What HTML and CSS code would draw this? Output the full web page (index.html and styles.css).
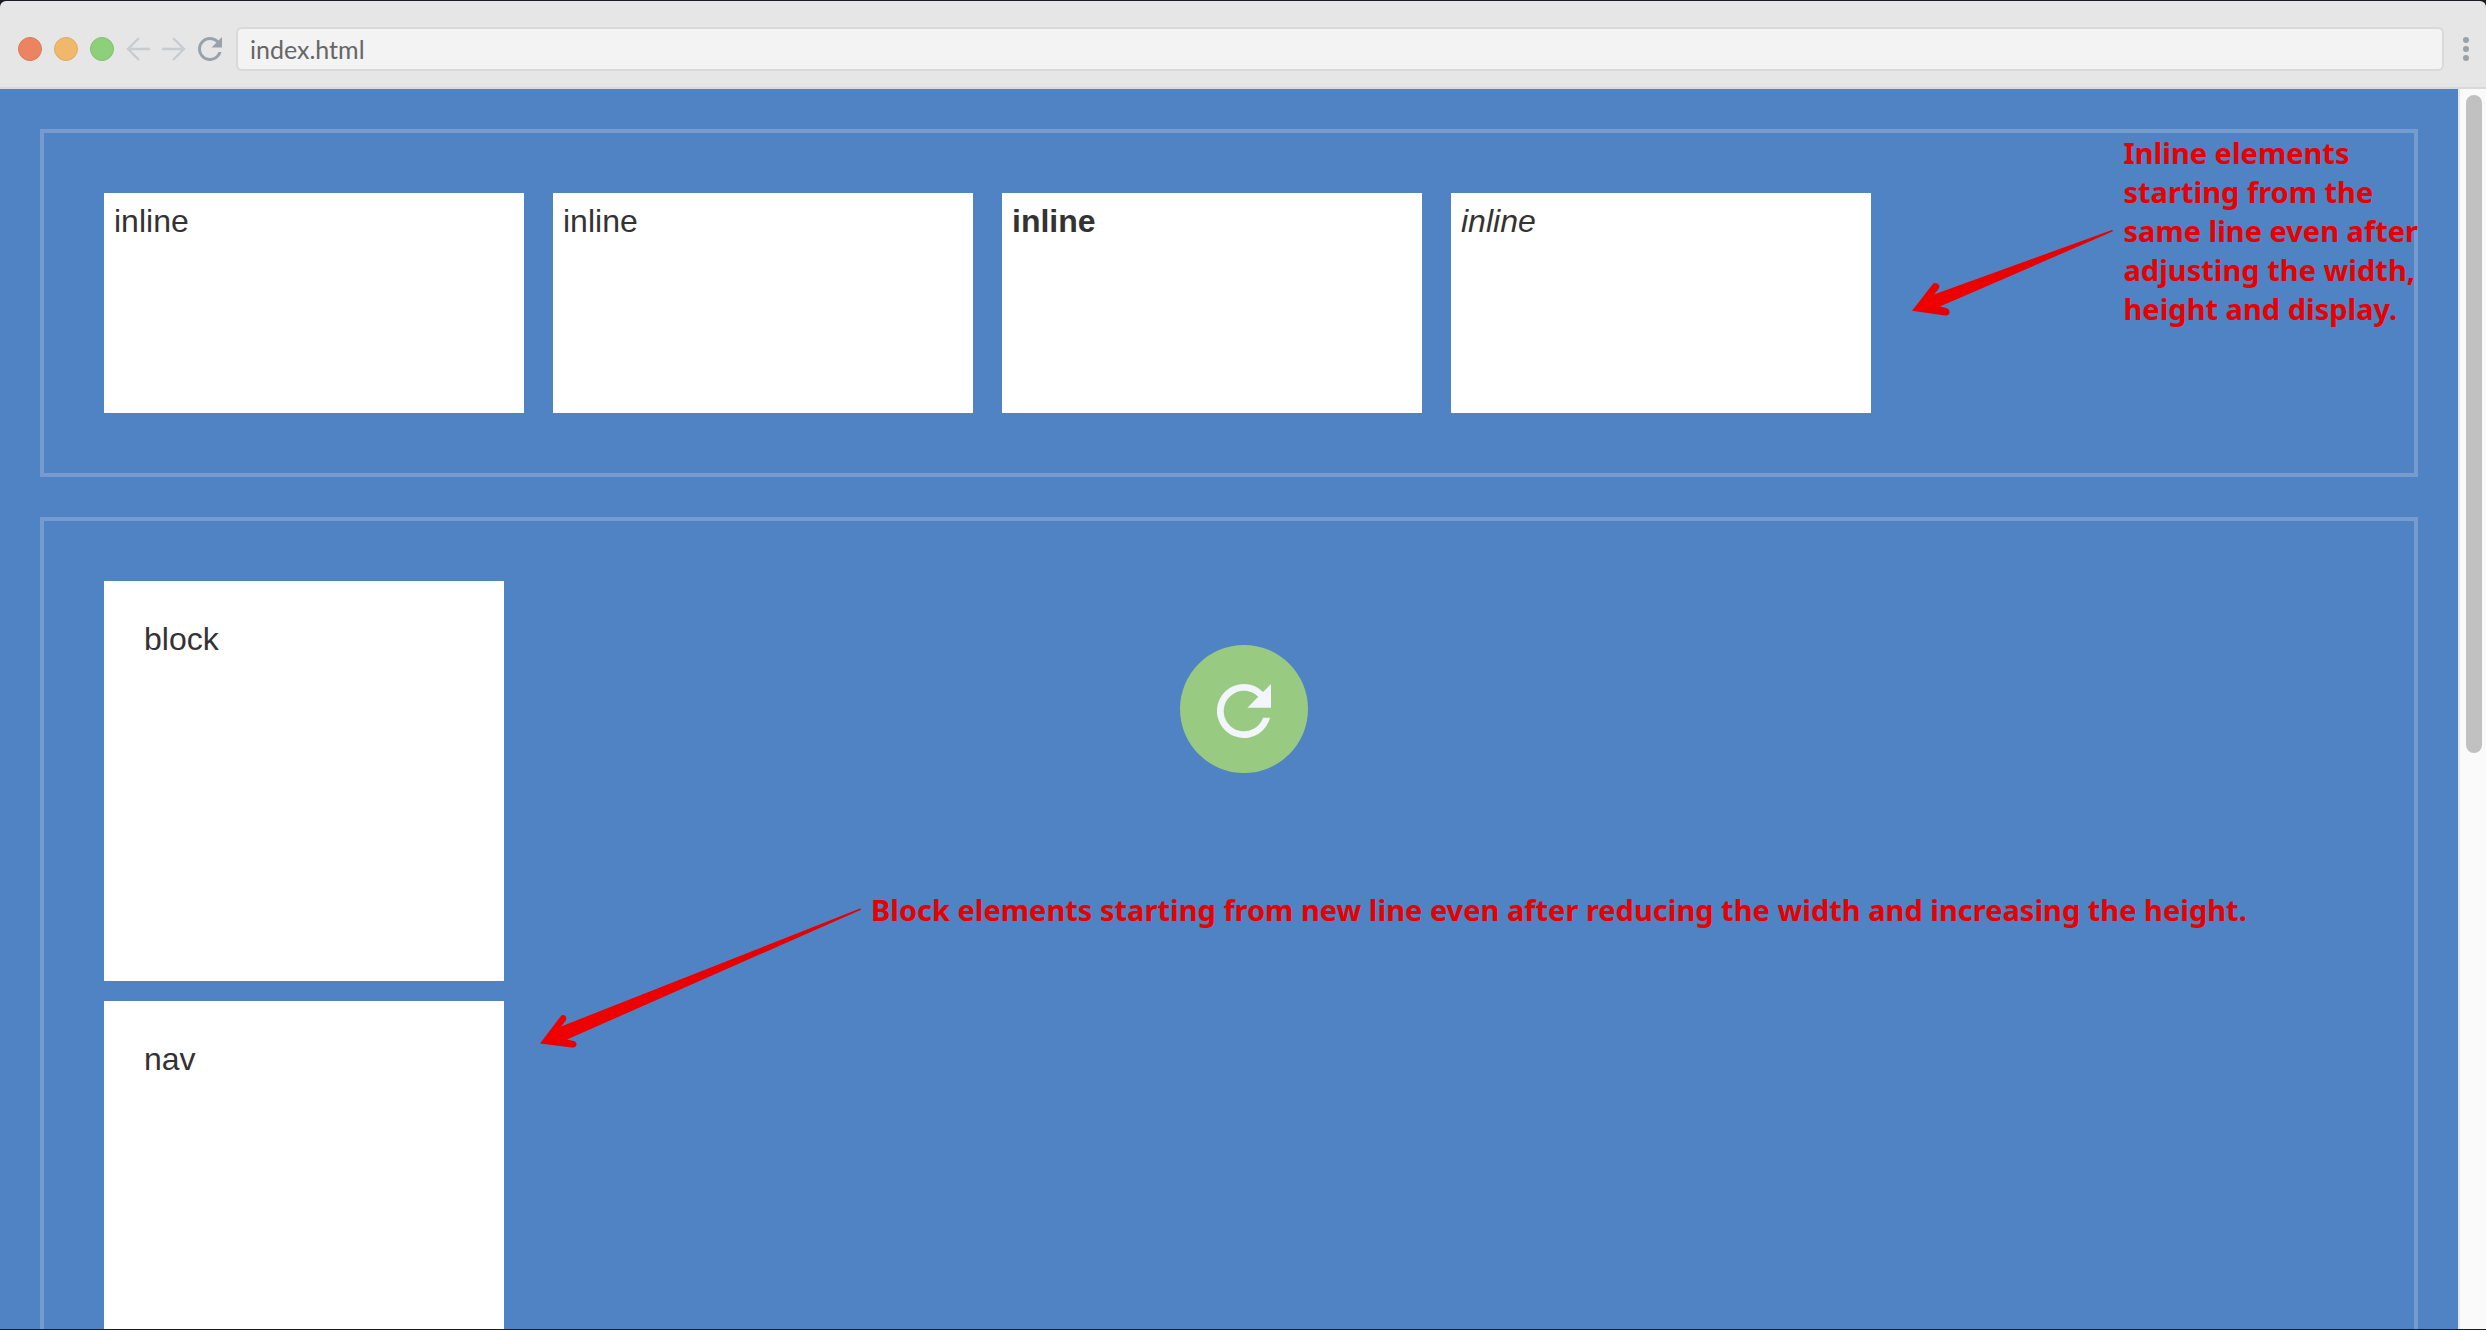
FILE: index.html
```html
<!DOCTYPE html>
<html lang="en">
<head>
<meta charset="utf-8">
<title>index.html</title>
<link rel="stylesheet" href="styles.css">
</head>
<body>
<div class="window">
  <header class="toolbar">
    <span class="light light-close"></span>
    <span class="light light-minimize"></span>
    <span class="light light-zoom"></span>
    <button class="tool" aria-label="Back">
      <svg width="24" height="24" viewBox="0 0 24 24" fill="none" stroke="#c8ccce" stroke-width="2.4"><path d="M24 12H2M13 1 2 12l11 11"/></svg>
    </button>
    <button class="tool" aria-label="Forward">
      <svg width="24" height="24" viewBox="0 0 24 24" fill="none" stroke="#c8ccce" stroke-width="2.4"><path d="M0 12h22M11 1l11 11-11 11"/></svg>
    </button>
    <button class="tool" aria-label="Reload">
      <svg width="24" height="24" viewBox="4 4 16 16" fill="#99a2a9"><path d="M17.65 6.35A7.96 7.96 0 0 0 12 4a8 8 0 1 0 7.73 10h-2.08A6 6 0 1 1 12 6c1.66 0 3.14.69 4.22 1.78L13 11h7V4l-2.35 2.35z"/></svg>
    </button>
    <input class="address" type="text" value="index.html" aria-label="Address">
    <button class="tool menu" aria-label="Menu">
      <svg width="6" height="24" viewBox="0 0 6 24" fill="#99a2a9"><circle cx="3" cy="3" r="3"/><circle cx="3" cy="12" r="3"/><circle cx="3" cy="21" r="3"/></svg>
    </button>
  </header>
  <div class="viewport">
    <main class="page">
      <section class="group row">
        <span class="inline-box">inline</span>
        <span class="inline-box">inline</span>
        <strong class="inline-box">inline</strong>
        <em class="inline-box">inline</em>
      </section>
      <section class="group stack">
        <div class="block-box">block</div>
        <nav class="block-box">nav</nav>
      </section>
      <p class="note note-inline">Inline elements<br>starting from the<br>same line even after<br>adjusting the width,<br>height and display.</p>
      <svg class="arrow arrow-inline" width="202" height="90" viewBox="1911 228 202 90">
        <defs><linearGradient id="red" x1="0" y1="0" x2=".4" y2="1"><stop offset=".5" stop-color="#e60000"/><stop offset=".8" stop-color="#f00000"/><stop offset="1" stop-color="#cf0000"/></linearGradient></defs>
        <path fill="url(#red)" d="M1912 310.700 1932.500 284.500Q1935 282 1938 284Q1940.500 286 1938.500 289L1934 294.500 2112 230Q2113.500 230 2112.500 231.500L1940 306.500 1946.500 308Q1950 309.500 1949.500 313Q1948.500 316 1945 315.500Z"/>
      </svg>
      <p class="note note-block">Block elements starting from new line even after reducing the width and increasing the height.</p>
      <svg class="arrow arrow-block" width="323" height="141" viewBox="539 908 323 141">
        <path fill="url(#red)" d="M540 1043.500 560.500 1016.500Q563 1014 565.500 1016Q567 1018 565.500 1021L561 1026.500 860 908.500Q862 909 860.500 910L567 1039.500 573.500 1041Q577 1042 576.500 1045Q575.500 1048 572 1047.500Z"/>
      </svg>
    </main>
    <div class="scrollbar"><div class="thumb"></div></div>
  </div>
  <button class="refresh" aria-label="Run again">
    <svg width="54" height="54" viewBox="4 4 16 16" fill="#f2f5fb"><path d="M17.65 6.35A7.96 7.96 0 0 0 12 4a8 8 0 1 0 7.73 10h-2.08A6 6 0 1 1 12 6c1.66 0 3.14.69 4.22 1.78L13 11h7V4l-2.35 2.35z"/></svg>
  </button>
</div>
</body>
</html>
```
FILE: styles.css
```css
* { box-sizing: border-box; }

body {
  margin: 0;
  height: 100vh;
  padding: 1px 0;
  background: #1c1a22;
  color: #333;
  font: 32px/37px "Liberation Sans", Arial, sans-serif;
}

button {
  margin: 0;
  padding: 0;
  border: 0;
  background: none;
}

.window {
  position: relative;
  display: flex;
  flex-direction: column;
  height: 100%;
  overflow: hidden;
  border-radius: 6px 6px 0 0;
  background: #e6e6e6;
}

.toolbar {
  display: flex;
  flex: none;
  align-items: center;
  gap: 12px;
  height: 88px;
  padding: 16px 17px 6px 18px;
  border-bottom: 2px solid #d9d9d9;
}

.light {
  width: 24px;
  height: 24px;
  border: 1px solid;
  border-radius: 50%;
}
.light-close { background: #ed8461; border-color: #d67a5c; }
.light-minimize { background: #f0b86b; border-color: #dcac69; }
.light-zoom { background: #8ed079; border-color: #85bf73; }

.tool { display: block; height: 24px; }
.tool svg { display: block; }
.menu { margin-left: 7px; }

.address {
  flex: 1;
  min-width: 0;
  height: 44px;
  margin: 0 0 0 2px;
  padding: 0 12px;
  border: 2px solid #d9d9d9;
  border-radius: 6px;
  background: #f3f3f3;
  color: #666;
  font: 25px Lato, sans-serif;
}

.viewport {
  display: flex;
  flex: 1;
  min-height: 0;
}

.page {
  position: relative;
  display: flex;
  flex: 1;
  flex-direction: column;
  gap: 40px;
  min-width: 0;
  padding: 40px;
  overflow: hidden;
  background: #4f83c3;
}

.group {
  display: flex;
  flex: none;
  padding: 60px;
  border: 4px solid #759bcf;
}
.row { gap: 29px; }
.stack { flex-direction: column; gap: 20px; }

.inline-box {
  width: 420px;
  height: 220px;
  padding: 10px;
  background: #fff;
}

.block-box {
  width: 400px;
  height: 400px;
  padding: 40px;
  background: #fff;
}

.note {
  position: absolute;
  margin: 0;
  color: #e60000;
  font: bold 29px/39px "Noto Sans", sans-serif;
  white-space: nowrap;
}
.note-inline { top: 44px; right: 40px; }
.note-block { top: 801px; left: 871px; }

.arrow { position: absolute; }
.arrow-inline { top: 139px; right: 345px; }
.arrow-block { top: 819px; left: 539px; }

.scrollbar {
  flex: none;
  width: 28px;
  padding: 6px 4px 0 6px;
  border-left: 2px solid #e8e8e8;
  background: #fafafa;
}
.thumb {
  height: 658px;
  border-radius: 8px;
  background: #c1c1c1;
}

.refresh {
  position: absolute;
  top: 644px;
  left: calc(50% - 63px);
  display: grid;
  place-items: center;
  width: 128px;
  height: 128px;
  padding-top: 4px;
  border-radius: 50%;
  background: #98ca81;
}
```
